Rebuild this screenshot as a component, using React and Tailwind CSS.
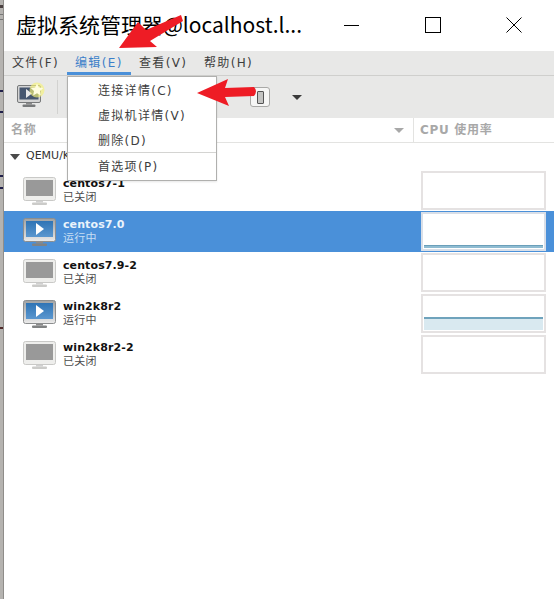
import React from 'react';

const vms = [
  { name: 'centos7-1', status: '已关闭', running: false },
  { name: 'centos7.0', status: '运行中', running: true, selected: true, usage: 'line' },
  { name: 'centos7.9-2', status: '已关闭', running: false },
  { name: 'win2k8r2', status: '运行中', running: true, usage: 'area' },
  { name: 'win2k8r2-2', status: '已关闭', running: false },
];

const menus = [
  { label: '文件(F)', cls: 'w-[63px] pl-[8px] text-[#3d3d3d]' },
  { label: '编辑(E)', cls: 'w-[64px] pl-[8px] text-[#3b7fc9] border-b-[3px] border-[#4a90d9]' },
  { label: '查看(V)', cls: 'w-[65px] pl-[8px] text-[#3d3d3d]' },
  { label: '帮助(H)', cls: 'w-[70px] pl-[8px] text-[#3d3d3d]' },
];

const editItems = [
  { label: '连接详情(C)', cls: 'h-[25px] pt-[3px]' },
  { label: '虚拟机详情(V)', cls: 'h-[25px] pt-[2px]' },
  { label: '删除(D)', cls: 'h-[26px] pt-[2px] border-b border-[#d4d4d2]' },
  { label: '首选项(P)', cls: 'h-[25px] pt-[2px]' },
];

function Monitor({ running }) {
  return (
    <svg width="34" height="28" viewBox="0 0 34 28" className="shrink-0">
      <defs>
        <linearGradient id="scr" x1="0" y1="0" x2="0" y2="1">
          <stop offset="0" stopColor="#2f74b5" />
          <stop offset="1" stopColor="#5b97cf" />
        </linearGradient>
        <linearGradient id="frame" x1="0" y1="0" x2="0" y2="1">
          <stop offset="0" stopColor="#a0a2a3" />
          <stop offset="0.7" stopColor="#d2d2d2" />
          <stop offset="1" stopColor="#ececec" />
        </linearGradient>
      </defs>
      <rect x="0.5" y="0.5" width="32" height="23" rx="2" fill={running ? 'url(#frame)' : '#eeeeec'} stroke={running ? '#8c8e8f' : '#c9c9c7'} />
      <rect x="3" y="3" width="27" height="16" fill={running ? 'url(#scr)' : '#999999'} />
      {running && <path d="M13 5 L21 11 L13 17 Z" fill="#ffffff" />}
      <rect x="13" y="24" width="7" height="1.5" fill={running ? '#8a8a8a' : '#d0d0d0'} />
      <rect x="9" y="25.5" width="15" height="2.5" rx="1" fill={running ? '#808283' : '#cbcbc9'} />
    </svg>
  );
}

function NewVmIcon() {
  return (
    <div className="relative w-[26px] h-[24px]">
      <svg width="26" height="24" viewBox="0 0 26 24">
        <rect x="0.5" y="0.5" width="23" height="17" rx="1.5" fill="#d4d4d4" stroke="#77797a" />
        <rect x="2.5" y="2.5" width="19" height="12" fill="#46566f" />
        <path d="M9 4 L15 8.5 L9 13 Z" fill="#e8e8e8" />
        <rect x="9" y="18" width="6" height="1.5" fill="#8a8a8a" />
        <rect x="5.5" y="19.5" width="13" height="2.5" rx="1" fill="#77797a" />
      </svg>
      <svg width="16" height="16" viewBox="0 0 16 16" className="absolute -top-[3px] left-[12px]">
        <circle cx="8" cy="8" r="7.5" fill="#f6f27a" opacity="0.65" />
        <path d="M8 1.5 L9.9 5.6 L14.3 6.1 L11 9.1 L11.9 13.5 L8 11.3 L4.1 13.5 L5 9.1 L1.7 6.1 L6.1 5.6 Z" fill="#fffde0" />
      </svg>
    </div>
  );
}

function Usage({ kind, selected }) {
  return (
    <div className={`w-[125px] h-[39px] border-2 bg-white flex flex-col justify-end p-[1px] ${selected ? 'border-[#d9dfe8]' : 'border-[#e5e2e2]'}`}>
      {kind === 'line' && (
        <div className="h-[3px] bg-[#8fbcd2] border-t border-[#6a9fba]" />
      )}
      {kind === 'area' && (
        <div className="h-[13px] bg-[#d9e9f0] border-t-2 border-[#6fa3bc]" />
      )}
    </div>
  );
}

function VmRow({ vm }) {
  return (
    <div className={`h-[41px] flex items-center pl-[19px] pr-[8px] ${vm.selected ? 'bg-[#4a90d9]' : ''}`}>
      <Monitor running={vm.running} />
      <div className="ml-[6px] flex-1">
        <div className={`text-[11px] leading-[14px] font-bold tracking-[0.1px] ${vm.selected ? 'text-[#eaf3fb]' : 'text-[#111111]'}`}>{vm.name}</div>
        <div className={`text-[11px] leading-[14px] tracking-[0.3px] ${vm.selected ? 'text-[#c7def3]' : 'text-[#4c4c4c]'}`}>{vm.status}</div>
      </div>
      <Usage kind={vm.usage} selected={vm.selected} />
    </div>
  );
}

export default function App() {
  return (
    <div className="relative w-[554px] h-[599px] overflow-hidden flex bg-white font-['DejaVu_Sans','Noto_Sans_CJK_SC',sans-serif]">
      {/* desktop behind the window */}
      <div className="w-[4px] bg-[#b5b3b0] border-r border-[#8f8d8a] shrink-0 flex flex-col">
        <div className="h-[3px] mt-[5px] bg-[#4a4040]" />
        <div className="h-[1px] mt-[6px] bg-[#777777]" />
        <div className="h-[1px] mt-[4px] bg-[#777777]" />
        <div className="h-[2px] mt-[70px] bg-[#20204a]" />
        <div className="h-[2px] mt-[19px] bg-[#20204a]" />
        <div className="h-[2px] mt-[62px] bg-[#20204a]" />
        <div className="h-[2px] mt-[10px] bg-[#20204a]" />
        <div className="h-[2px] mt-[138px] bg-[#502a2a]" />
      </div>

      <div className="flex-1 min-w-0 flex flex-col">
        {/* title bar */}
        <div className="h-[51px] flex items-center bg-white">
          <div className="w-[316px] shrink-0 pl-[12px] pb-[2px] text-[21px] text-black whitespace-nowrap font-['Noto_Sans_CJK_SC','Noto_Sans',sans-serif]">虚拟系统管理器@localhost.l...</div>
          <div className="flex items-center pb-[1px]">
            <div className="w-[15px] h-[1px] bg-black ml-[24px]" />
            <div className="w-[16px] h-[16px] border border-black ml-[66px]" />
            <svg width="16" height="16" viewBox="0 0 16 16" className="ml-[65px]">
              <path d="M0.5 0.5 L15.5 15.5 M15.5 0.5 L0.5 15.5" stroke="#000" strokeWidth="1" fill="none" />
            </svg>
          </div>
        </div>

        {/* menu bar */}
        <div className="h-[25px] flex bg-[#e8e8e7] border-b border-[#cfcfcd] text-[12px] tracking-[1.35px]">
          {menus.map(m => (
            <div key={m.label} className={`h-[24px] leading-[24px] whitespace-nowrap ${m.cls}`}>{m.label}</div>
          ))}
        </div>

        {/* toolbar */}
        <div className="h-[42px] flex items-center bg-[#e8e8e7]">
          <div className="ml-[13px]"><NewVmIcon /></div>
          <div className="w-[1px] h-[34px] ml-[14px] bg-[#d2d2d0]" />
          <div className="w-[20px] h-[20px] ml-[192px] rounded-[3px] border border-[#a9a9a7] bg-[#f6f6f5] flex items-center justify-center">
            <div className="w-[7px] h-[13px] bg-[#c4c4c2] border border-[#555555] rounded-[1px]" />
          </div>
          <div className="ml-[22px] w-0 h-0 border-x-[5px] border-x-transparent border-t-[5px] border-t-[#3a3a3a]" />
        </div>

        {/* list header */}
        <div className="h-[25px] flex bg-white border-b border-[#e3e3e1] text-[12px] font-bold tracking-[0.7px] text-[#a8a8a8]">
          <div className="w-[410px] pl-[7px] leading-[24px] border-r border-[#e3e3e1] relative">
            名称
            <div className="absolute right-[9px] top-[10px] w-0 h-0 border-x-[5px] border-x-transparent border-t-[5px] border-t-[#a8a8a8]" />
          </div>
          <div className="pl-[6px] leading-[24px]">CPU 使用率</div>
        </div>

        {/* vm list */}
        <div className="flex-1">
          <div className="h-[27px] flex items-center pl-[6px] text-[11px] text-[#333333]">
            <div className="w-0 h-0 border-x-[5px] border-x-transparent border-t-[6px] border-t-[#4a4a4a]" />
            <span className="ml-[6px]">QEMU/KVM</span>
          </div>
          {vms.map(vm => <VmRow key={vm.name} vm={vm} />)}
        </div>
      </div>

      {/* open edit menu */}
      <div className="absolute left-[67px] top-[76px] w-[150px] h-[105px] bg-white border border-[#b0b0ae] text-[12px] tracking-[1.3px] text-[#3d3d3d] shadow-[0_1px_2px_rgba(0,0,0,0.1)]">
        {editItems.map(it => (
          <div key={it.label} className={`pl-[30px] flex items-center ${it.cls}`}>{it.label}</div>
        ))}
      </div>

      {/* red annotation arrows */}
      <svg width="554" height="120" viewBox="0 0 554 120" className="absolute left-0 top-0 pointer-events-none">
        <path d="M119 48 L138 22 L146 30 L181 15 L183 21 L150 41 L157 47 Z" fill="#ee1c25" />
        <path d="M197 93 L228 79 L225 88 L254 87 Q258 91 254 96 L225 97 L229 106 Z" fill="#ee1c25" />
      </svg>
    </div>
  );
}
